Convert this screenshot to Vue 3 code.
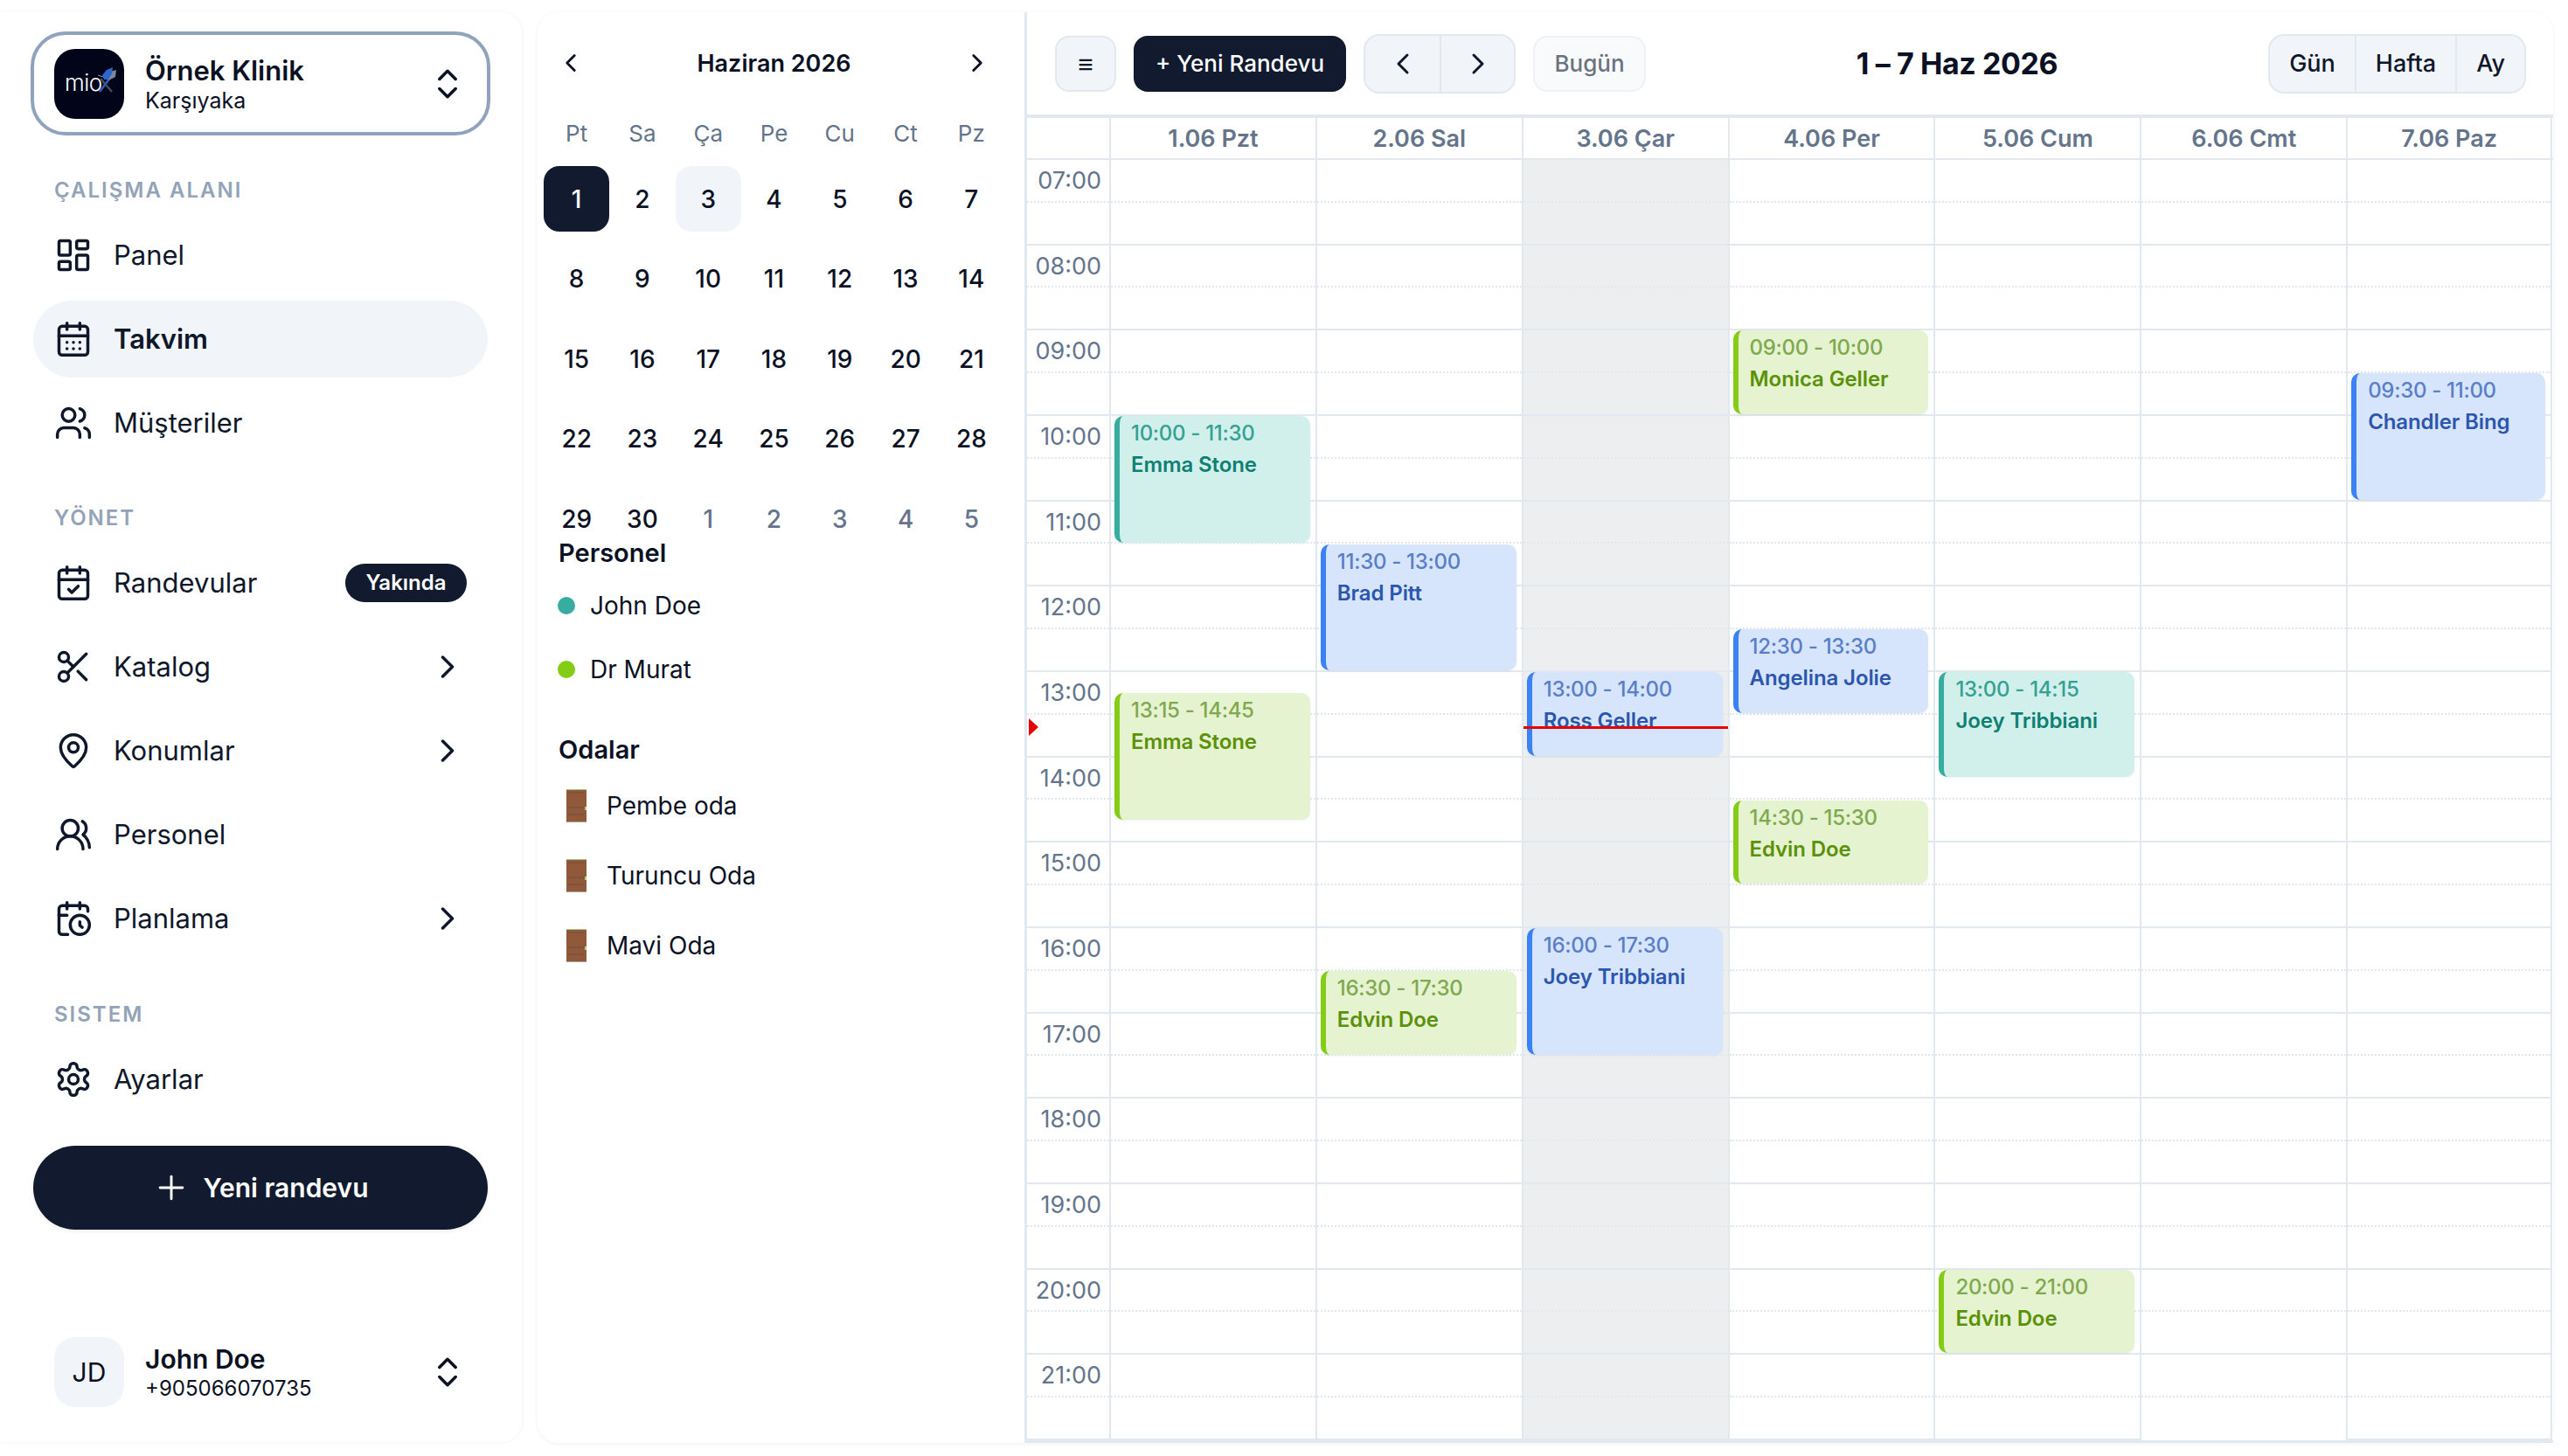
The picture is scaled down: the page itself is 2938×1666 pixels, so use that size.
<template>
  <div class="page">
    <aside class="sidebar">
      <div class="clinic">
        <div class="logo">
          <span class="logo-text">mio</span>
          <svg class="logo-mark" viewBox="0 0 80 80">
            <path d="M53 34 66 49" stroke="#454c5c" stroke-width="2.6" fill="none" />
            <path d="M52 49 64 33" stroke="#2b5cb8" stroke-width="2.6" fill="none" />
            <path d="M60 27 71 24 70 32 62 36Z" fill="#7c8698" />
            <path d="M55 30 60 24 67 21 66 28 62 35 57 35Z" fill="#2f66cc" />
            <path d="M50 30 56 32" stroke="#8a93a6" stroke-width="1" />
          </svg>
        </div>
        <div class="clinic-text">
          <div class="clinic-name">Örnek Klinik</div>
          <div class="clinic-sub">Karşıyaka</div>
        </div>
        <svg class="ico" viewBox="0 0 24 24"><path d="m7 15 5 5 5-5" /><path d="m7 9 5-5 5 5" /></svg>
      </div>

      <div v-for="section in sections" :key="section.label" class="section">
        <div class="section-label">{{ section.label }}</div>
        <div class="nav">
          <div v-for="item in section.items" :key="item.label" class="nav-item" :class="{ active: item.active }">
            <svg class="ico" viewBox="0 0 24 24">
              <template v-for="(shape, i) in icons[item.icon]" :key="i">
                <path v-if="shape.d" :d="shape.d" />
                <circle v-else-if="shape.r" :cx="shape.cx" :cy="shape.cy" :r="shape.r" />
                <rect v-else :x="shape.x" :y="shape.y" :width="shape.w" :height="shape.h" :rx="shape.rx" />
              </template>
            </svg>
            <span class="nav-label">{{ item.label }}</span>
            <span v-if="item.badge" class="badge">{{ item.badge }}</span>
            <svg v-if="item.arrow" class="ico arrow" viewBox="0 0 24 24"><path d="m9 18 6-6-6-6" /></svg>
          </div>
        </div>
      </div>

      <button class="new-btn">
        <svg class="ico plus" viewBox="0 0 24 24"><path d="M5 12h14" /><path d="M12 5v14" /></svg>
        Yeni randevu
      </button>

      <div class="user">
        <div class="avatar">JD</div>
        <div class="clinic-text">
          <div class="user-name">John Doe</div>
          <div class="user-phone">+905066070735</div>
        </div>
        <svg class="ico" viewBox="0 0 24 24"><path d="m7 15 5 5 5-5" /><path d="m7 9 5-5 5 5" /></svg>
      </div>
    </aside>

    <div class="card">
      <section class="mini">
        <div class="mini-head">
          <svg class="ico small" viewBox="0 0 24 24"><path d="m15 18-6-6 6-6" /></svg>
          <span class="mini-title">Haziran 2026</span>
          <svg class="ico small" viewBox="0 0 24 24"><path d="m9 18 6-6-6-6" /></svg>
        </div>
        <div class="weekdays">
          <span v-for="d in weekdays" :key="d">{{ d }}</span>
        </div>
        <div class="days">
          <span
            v-for="(d, i) in days"
            :key="i"
            class="day"
            :class="{ selected: i === 0, today: i === 2, muted: i > 29 }"
          >{{ d }}</span>
        </div>

        <div class="side-title">Personel</div>
        <div class="staff-list">
          <div v-for="p in staff" :key="p.name" class="staff-row">
            <i class="dot" :style="{ background: p.color }"></i>
            {{ p.name }}
          </div>
        </div>

        <div class="side-title rooms-title">Odalar</div>
        <div class="room-list">
          <div v-for="r in rooms" :key="r" class="room-row">
            <svg class="door" viewBox="0 0 23 38">
              <rect width="23" height="38" fill="#91593a" />
              <rect width="23" height="1" fill="#a9c27c" />
              <path d="M3 4h17M3 21h17M3 29h17" stroke="#4a4a4a" stroke-width="1" stroke-dasharray="1.5 1" />
              <rect x="21" y="20" width="2" height="4" fill="#a6d86f" />
              <rect y="37" width="23" height="1" fill="#a8a29a" />
            </svg>
            {{ r }}
          </div>
        </div>
      </section>

      <section class="main">
        <div class="toolbar">
          <div class="tools">
            <button class="btn menu">≡</button>
            <button class="btn primary">+ Yeni Randevu</button>
            <div class="group">
              <button class="btn-part wide">
                <svg class="ico mid" viewBox="0 0 24 24"><path d="m15 18-6-6 6-6" /></svg>
              </button>
              <button class="btn-part wide">
                <svg class="ico mid" viewBox="0 0 24 24"><path d="m9 18 6-6-6-6" /></svg>
              </button>
            </div>
            <button class="btn disabled">Bugün</button>
          </div>
          <h2 class="range">1 – 7 Haz 2026</h2>
          <div class="group views">
            <button v-for="v in views" :key="v" class="btn-part">{{ v }}</button>
          </div>
        </div>

        <div class="grid-head">
          <div class="head-cell"></div>
          <div v-for="h in dayHeads" :key="h" class="head-cell">{{ h }}</div>
        </div>

        <div class="grid-body">
          <div class="gutter">
            <div v-for="hour in hours" :key="hour" class="hour">
              <div class="half"><span class="time">{{ hour }}</span></div>
              <div class="half second"></div>
            </div>
            <i class="now-mark"></i>
          </div>
          <div v-for="(col, c) in dayHeads" :key="col" class="col" :class="{ current: c === 2 }">
            <div v-for="hour in hours" :key="hour" class="hour">
              <div class="half"></div>
              <div class="half second"></div>
            </div>
            <div
              v-for="ev in eventsFor(c)"
              :key="ev.time"
              class="event"
              :class="ev.tone"
              :style="eventStyle(ev)"
            >
              <div class="ev-time">{{ ev.time }}</div>
              <div class="ev-name">{{ ev.name }}</div>
            </div>
            <i v-if="c === 2" class="now-line"></i>
          </div>
        </div>
      </section>
    </div>
  </div>
</template>

<script setup>
const HOUR = 97.67

const calBase = [
  { d: 'M8 2v4' },
  { d: 'M16 2v4' },
  { x: 3, y: 4, w: 18, h: 18, rx: 2 },
  { d: 'M3 10h18' },
]

const icons = {
  panel: [
    { x: 3, y: 3, w: 7, h: 9, rx: 1 },
    { x: 14, y: 3, w: 7, h: 5, rx: 1 },
    { x: 14, y: 12, w: 7, h: 9, rx: 1 },
    { x: 3, y: 16, w: 7, h: 5, rx: 1 },
  ],
  calendar: [
    ...calBase,
    { d: 'M8 14h.01M12 14h.01M16 14h.01M8 18h.01M12 18h.01M16 18h.01' },
  ],
  users: [
    { d: 'M16 21v-2a4 4 0 0 0-4-4H6a4 4 0 0 0-4 4v2' },
    { cx: 9, cy: 7, r: 4 },
    { d: 'M22 21v-2a4 4 0 0 0-3-3.87' },
    { d: 'M16 3.13a4 4 0 0 1 0 7.75' },
  ],
  check: [...calBase, { d: 'm9 16 2 2 4-4' }],
  scissors: [
    { cx: 6, cy: 6, r: 3 },
    { d: 'M8.12 8.12 12 12' },
    { d: 'M20 4 8.12 15.88' },
    { cx: 6, cy: 18, r: 3 },
    { d: 'M14.8 14.8 20 20' },
  ],
  pin: [
    { d: 'M20 10c0 4.993-5.539 10.193-7.399 11.799a1 1 0 0 1-1.202 0C9.539 20.193 4 14.993 4 10a8 8 0 0 1 16 0' },
    { cx: 12, cy: 10, r: 3 },
  ],
  staff: [
    { d: 'M18 21a8 8 0 0 0-16 0' },
    { cx: 10, cy: 8, r: 5 },
    { d: 'M22 20c0-3.37-2-6.5-4-8a5 5 0 0 0-.45-8.3' },
  ],
  clock: [
    { d: 'M21 7.5V6a2 2 0 0 0-2-2H5a2 2 0 0 0-2 2v14a2 2 0 0 0 2 2h3.5' },
    { d: 'M16 2v4' },
    { d: 'M8 2v4' },
    { d: 'M3 10h5' },
    { d: 'M17.5 17.5 16 16.3V14' },
    { cx: 16, cy: 16, r: 6 },
  ],
  gear: [
    { d: 'M12.22 2h-.44a2 2 0 0 0-2 2v.18a2 2 0 0 1-1 1.73l-.43.25a2 2 0 0 1-2 0l-.15-.08a2 2 0 0 0-2.73.73l-.22.38a2 2 0 0 0 .73 2.73l.15.1a2 2 0 0 1 1 1.72v.51a2 2 0 0 1-1 1.74l-.15.09a2 2 0 0 0-.73 2.73l.22.38a2 2 0 0 0 2.73.73l.15-.08a2 2 0 0 1 2 0l.43.25a2 2 0 0 1 1 1.73V20a2 2 0 0 0 2 2h.44a2 2 0 0 0 2-2v-.18a2 2 0 0 1 1-1.73l.43-.25a2 2 0 0 1 2 0l.15.08a2 2 0 0 0 2.73-.73l.22-.39a2 2 0 0 0-.73-2.73l-.15-.08a2 2 0 0 1-1-1.74v-.5a2 2 0 0 1 1-1.74l.15-.09a2 2 0 0 0 .73-2.73l-.22-.38a2 2 0 0 0-2.73-.73l-.15.08a2 2 0 0 1-2 0l-.43-.25a2 2 0 0 1-1-1.73V4a2 2 0 0 0-2-2z' },
    { cx: 12, cy: 12, r: 3 },
  ],
}

const sections = [
  {
    label: 'ÇALIŞMA ALANI',
    items: [
      { label: 'Panel', icon: 'panel' },
      { label: 'Takvim', icon: 'calendar', active: true },
      { label: 'Müşteriler', icon: 'users' },
    ],
  },
  {
    label: 'YÖNET',
    items: [
      { label: 'Randevular', icon: 'check', badge: 'Yakında' },
      { label: 'Katalog', icon: 'scissors', arrow: true },
      { label: 'Konumlar', icon: 'pin', arrow: true },
      { label: 'Personel', icon: 'staff' },
      { label: 'Planlama', icon: 'clock', arrow: true },
    ],
  },
  {
    label: 'SISTEM',
    items: [{ label: 'Ayarlar', icon: 'gear' }],
  },
]

const weekdays = ['Pt', 'Sa', 'Ça', 'Pe', 'Cu', 'Ct', 'Pz']
const days = [...Array.from({ length: 30 }, (_, i) => i + 1), 1, 2, 3, 4, 5]
const staff = [
  { name: 'John Doe', color: '#36ada0' },
  { name: 'Dr Murat', color: '#84cc16' },
]
const rooms = ['Pembe oda', 'Turuncu Oda', 'Mavi Oda']
const views = ['Gün', 'Hafta', 'Ay']
const dayHeads = ['1.06 Pzt', '2.06 Sal', '3.06 Çar', '4.06 Per', '5.06 Cum', '6.06 Cmt', '7.06 Paz']
const hours = Array.from({ length: 15 }, (_, i) => String(i + 7).padStart(2, '0') + ':00')

const events = [
  { col: 0, start: 10, end: 11.5, time: '10:00 - 11:30', name: 'Emma Stone', tone: 'teal' },
  { col: 0, start: 13.25, end: 14.75, time: '13:15 - 14:45', name: 'Emma Stone', tone: 'green' },
  { col: 1, start: 11.5, end: 13, time: '11:30 - 13:00', name: 'Brad Pitt', tone: 'blue' },
  { col: 1, start: 16.5, end: 17.5, time: '16:30 - 17:30', name: 'Edvin Doe', tone: 'green' },
  { col: 2, start: 13, end: 14, time: '13:00 - 14:00', name: 'Ross Geller', tone: 'blue' },
  { col: 2, start: 16, end: 17.5, time: '16:00 - 17:30', name: 'Joey Tribbiani', tone: 'blue' },
  { col: 3, start: 9, end: 10, time: '09:00 - 10:00', name: 'Monica Geller', tone: 'green' },
  { col: 3, start: 12.5, end: 13.5, time: '12:30 - 13:30', name: 'Angelina Jolie', tone: 'blue' },
  { col: 3, start: 14.5, end: 15.5, time: '14:30 - 15:30', name: 'Edvin Doe', tone: 'green' },
  { col: 4, start: 13, end: 14.25, time: '13:00 - 14:15', name: 'Joey Tribbiani', tone: 'teal' },
  { col: 4, start: 20, end: 21, time: '20:00 - 21:00', name: 'Edvin Doe', tone: 'green' },
  { col: 6, start: 9.5, end: 11, time: '09:30 - 11:00', name: 'Chandler Bing', tone: 'blue' },
]

const eventsFor = (c) => events.filter((e) => e.col === c)
const eventStyle = (e) => ({
  top: (e.start - 7) * HOUR + 'px',
  height: (e.end - e.start) * HOUR - 2 + 'px',
})
</script>

<style>
html,
body {
  margin: 0;
  background: #fff;
}
</style>

<style scoped>
.page {
  display: flex;
  width: 2938px;
  height: 1666px;
  overflow: hidden;
  background: #fff;
  color: #0b1124;
  font-family: Inter, "Noto Sans", sans-serif;
}

button {
  font-family: inherit;
  border: 0;
  padding: 0;
  cursor: pointer;
}

.ico {
  width: 44px;
  height: 44px;
  flex: none;
  fill: none;
  stroke: currentColor;
  stroke-width: 1.9;
  stroke-linecap: round;
  stroke-linejoin: round;
}

.ico.small {
  width: 34px;
  height: 34px;
  stroke-width: 2;
}

.ico.mid {
  width: 40px;
  height: 40px;
  stroke-width: 1.8;
}

/* left nav */
.sidebar {
  width: 597px;
  height: 1636px;
  margin-top: 14px;
  padding: 22px 39px 0 38px;
  box-sizing: border-box;
  display: flex;
  flex-direction: column;
  border-radius: 0 24px 24px 0;
  box-shadow: 1px 0 4px rgba(15, 23, 42, 0.05);
  flex: none;
}

.clinic {
  display: flex;
  align-items: center;
  height: 119px;
  margin: 0 -3px;
  padding: 0 23px;
  box-sizing: border-box;
  border: 4px solid #8fa3bd;
  border-radius: 40px;
  gap: 24px;
}

.logo {
  position: relative;
  width: 80px;
  height: 80px;
  flex: none;
  background: #02041a;
  border-radius: 24px;
  overflow: hidden;
}

.logo-text {
  position: absolute;
  left: 12px;
  top: 24px;
  color: #fff;
  font-size: 26px;
  line-height: 30px;
  font-weight: 300;
  letter-spacing: -0.5px;
}

.logo-mark {
  position: absolute;
  inset: 0;
  width: 80px;
  height: 80px;
}

.clinic-text {
  flex: 1;
  min-width: 0;
}

.clinic-name {
  font-size: 31px;
  font-weight: 600;
  line-height: 40px;
}

.clinic-sub {
  font-size: 25px;
  line-height: 29px;
}

.section {
  margin-top: 45px;
}

.section + .section {
  margin-top: 47px;
}

.section + .section + .section {
  margin-top: 48px;
}

.section-label {
  padding-left: 24px;
  font-size: 24px;
  line-height: 36px;
  font-weight: 600;
  letter-spacing: 2px;
  color: #94a3b8;
}

.nav {
  margin-top: 12px;
  display: flex;
  flex-direction: column;
  gap: 8px;
}

.nav-item {
  display: flex;
  align-items: center;
  height: 88px;
  padding: 0 24px;
  border-radius: 44px;
  font-size: 31px;
  color: #0f172a;
}

.nav-item .ico:first-child {
  margin-right: 24px;
}

.nav-item.active {
  background: #f1f5f9;
  font-weight: 600;
}

.nav-label {
  flex: 1;
  padding-bottom: 2px;
}

.badge {
  height: 44px;
  width: 139px;
  text-align: center;
  line-height: 44px;
  border-radius: 22px;
  background: #111a2e;
  color: #fff;
  font-size: 24px;
  font-weight: 600;
}

.new-btn {
  margin-top: 32px;
  height: 96px;
  flex: none;
  border-radius: 48px;
  background: #111a2e;
  color: #fff;
  font-size: 30px;
  font-weight: 600;
  display: flex;
  align-items: center;
  justify-content: center;
  gap: 14px;
  box-shadow: 0 2px 4px rgba(15, 23, 42, 0.08);
}

.plus {
  stroke-width: 1.6;
}

.user {
  margin-top: auto;
  margin-bottom: 40px;
  padding: 0 24px;
  display: flex;
  align-items: center;
  gap: 24px;
}

.avatar {
  width: 80px;
  height: 80px;
  flex: none;
  border-radius: 24px;
  background: #f1f5f9;
  display: flex;
  align-items: center;
  justify-content: center;
  font-size: 30px;
}

.user-name {
  font-size: 30px;
  font-weight: 600;
  line-height: 38px;
}

.user-phone {
  font-size: 24px;
  line-height: 30px;
}

/* card */
.card {
  flex: none;
  display: flex;
  width: 2306px;
  height: 1637px;
  margin: 14px 0 0 18px;
  background: #fff;
  border-radius: 24px;
  box-shadow: 0 1px 5px rgba(15, 23, 42, 0.06);
}

.mini {
  width: 557px;
  flex: none;
  padding: 30px 23px 0 7px;
  box-sizing: border-box;
}

.mini-head {
  height: 56px;
  padding: 0 14px;
  display: flex;
  align-items: center;
  justify-content: space-between;
}

.mini-title {
  font-size: 27px;
  font-weight: 600;
}

.weekdays,
.days {
  display: grid;
  grid-template-columns: repeat(7, 1fr);
  text-align: center;
}

.weekdays {
  margin-top: 33px;
  line-height: 40px;
  font-size: 26px;
  color: #64748b;
}

.days {
  margin-top: 17px;
  margin-bottom: -16px;
  grid-auto-rows: 75px;
  row-gap: 16.5px;
}

.day {
  display: flex;
  align-items: center;
  justify-content: center;
  font-size: 28px;
  font-weight: 500;
  border-radius: 18px;
}

.day.selected {
  background: #111a2e;
  color: #fff;
}

.day.today {
  background: #f1f5f9;
}

.day.muted {
  color: #64748b;
}

.side-title {
  margin-left: 17px;
  font-size: 29px;
  font-weight: 600;
  line-height: 36px;
}

.rooms-title {
  margin-top: 38px;
}

.staff-list {
  margin-top: 5px;
}

.staff-row {
  display: flex;
  align-items: center;
  height: 73px;
  margin-left: 16px;
  gap: 17px;
  font-size: 28px;
}

.dot {
  width: 20px;
  height: 20px;
  border-radius: 50%;
}

.room-list {
  margin-top: 6px;
}

.room-row {
  display: flex;
  align-items: center;
  height: 80px;
  margin-left: 26px;
  gap: 23px;
  font-size: 28px;
}

.door {
  width: 23px;
  height: 38px;
  flex: none;
}

/* main calendar */
.main {
  flex: 1;
  min-width: 0;
  border-left: 3px solid #e2e8f0;
  display: flex;
  flex-direction: column;
}

.toolbar {
  height: 117px;
  flex: none;
  padding: 0 31px 0 32px;
  box-sizing: border-box;
  display: flex;
  align-items: center;
  justify-content: space-between;
}

.tools {
  display: flex;
  align-items: center;
  gap: 20px;
}

.btn {
  height: 64px;
  border-radius: 16px;
  font-size: 26px;
  font-weight: 500;
  box-sizing: border-box;
}

.menu {
  width: 70px;
  background: #f1f5f9;
  border: 2px solid #e2e8f0;
  color: #0f172a;
  font-size: 30px;
}

.primary {
  width: 243px;
  background: #111a2e;
  color: #fff;
}

.disabled {
  width: 129px;
  background: #f8fafc;
  border: 2px solid #eef1f5;
  color: #6b7280;
}

.group {
  display: flex;
  height: 64px;
  background: #f1f5f9;
  border: 2px solid #e2e8f0;
  border-radius: 18px;
  overflow: hidden;
}

.btn-part {
  padding: 0 22px;
  background: transparent;
  color: #0f172a;
  font-size: 27px;
  font-weight: 500;
  display: flex;
  align-items: center;
}

.btn-part + .btn-part {
  border-left: 2px solid #e2e8f0;
}

.btn-part.wide {
  width: 85px;
  padding: 0;
  justify-content: center;
}

.range {
  margin: 0;
  font-size: 34px;
  font-weight: 700;
  letter-spacing: -0.4px;
}

.grid-head {
  display: grid;
  grid-template-columns: 94px repeat(7, 235.86px);
  height: 52px;
  box-sizing: border-box;
  flex: none;
  border-top: 4px solid #e2e8f0;
  border-bottom: 2px solid #e2e8f0;
}

.head-cell {
  border-left: 2px solid #e2e8f0;
  display: flex;
  align-items: center;
  justify-content: center;
  font-size: 27px;
  font-weight: 600;
  color: #64748b;
}

.head-cell:first-child {
  border-left: 0;
}

.head-cell:last-child {
  border-right: 2px solid #e2e8f0;
}

.grid-body {
  display: grid;
  grid-template-columns: 94px repeat(7, 235.86px);
  height: 1468px;
  border-bottom: 3px solid #e2e8f0;
  box-sizing: border-box;
}

.gutter,
.col {
  position: relative;
}

.col {
  border-left: 2px solid #e2e8f0;
}

.col:last-child {
  border-right: 2px solid #e2e8f0;
}

.col.current {
  background: #edeef0;
}

.hour {
  height: 97.67px;
  box-sizing: border-box;
}

.half {
  height: 50%;
  box-sizing: border-box;
  border-bottom: 2px dotted #e2e8f0;
  text-align: right;
  padding-right: 9px;
}

.half.second {
  border-bottom: 2px solid #e2e8f0;
}

.hour:last-child .half.second {
  border-bottom: 0;
}

.time {
  display: block;
  padding-top: 8px;
  font-size: 27px;
  line-height: 32px;
  color: #64748b;
}

.now-mark {
  position: absolute;
  left: 2px;
  top: 639px;
  width: 0;
  height: 0;
  border-left: 11px solid #e60000;
  border-top: 10px solid transparent;
  border-bottom: 10px solid transparent;
}

.now-line {
  position: absolute;
  left: 0;
  right: 0;
  top: 648px;
  height: 3px;
  background: #e60000;
  z-index: 2;
}

.event {
  position: absolute;
  left: 4px;
  right: 6px;
  padding: 5px 10px 0 13px;
  box-sizing: border-box;
  border-left: 6px solid;
  border-radius: 10px;
  font-size: 24px;
  box-shadow: 0 1px 3px rgba(15, 23, 42, 0.06);
  overflow: hidden;
}

.ev-time {
  line-height: 30px;
  font-weight: 500;
  letter-spacing: -0.3px;
}

.ev-name {
  margin-top: 6px;
  line-height: 30px;
  font-weight: 600;
  letter-spacing: -0.1px;
}

.teal {
  background: #d1f0ec;
  border-color: #36ad9e;
}

.teal .ev-time {
  color: #35a093;
}

.teal .ev-name {
  color: #0f7f72;
}

.blue {
  background: #d6e5fb;
  border-color: #3b82f6;
}

.blue .ev-time {
  color: #5a7fc9;
}

.blue .ev-name {
  color: #2c56ad;
}

.green {
  background: #e6f3d0;
  border-color: #84cc16;
}

.green .ev-time {
  color: #7fa94e;
}

.green .ev-name {
  color: #5a9107;
}
</style>
